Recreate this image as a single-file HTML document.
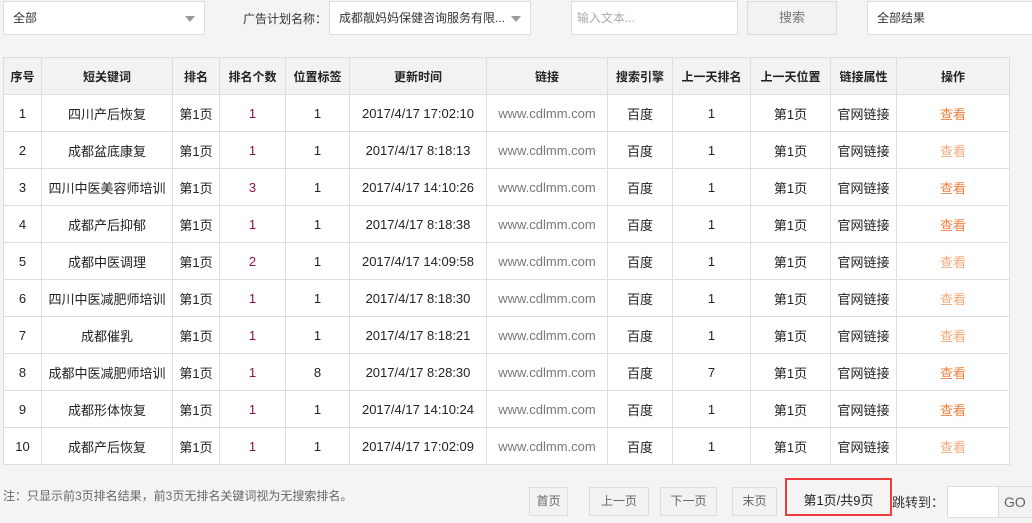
<!DOCTYPE html>
<html><head><meta charset="utf-8"><style>
*{box-sizing:border-box;margin:0;padding:0}
body{width:1032px;height:523px;background:#f4f4f4;font-family:"Liberation Sans","Noto Sans CJK SC",sans-serif;font-size:12px;color:#333;position:relative;overflow:hidden}
.b{position:absolute;background:#fff;border:1px solid #ddd;height:34px;line-height:32px;padding-left:9px;font-size:12px;color:#333}
.tri{position:absolute;right:9px;top:14px;width:0;height:0;border-left:5px solid transparent;border-right:5px solid transparent;border-top:6px solid #999}
table{position:absolute;left:3px;top:57px;border-collapse:collapse;background:#fff;table-layout:fixed;width:1006px}
td,th{border:1px solid #ddd;text-align:center;height:37px;font-size:12px;padding:0;white-space:nowrap;overflow:hidden}
td{font-size:13px}
th{background:#f2f2f2;font-weight:bold;color:#222}
td{color:#222}
.r{color:#8a1048}.l{color:#777}.o{color:#f08040}.g{color:#f4a878}
.btn{position:absolute;top:487px;height:29px;line-height:27px;border:1px solid #ddd;background:#f2f2f2;text-align:center;color:#666;font-size:12px}
</style></head><body>
<div class="b" style="left:3px;top:1px;width:202px">全部<span class="tri"></span></div>
<div style="position:absolute;left:243px;top:10px;color:#333">广告计划名称：</div>
<div class="b" style="left:329px;top:1px;width:202px">成都靓妈妈保健咨询服务有限...<span class="tri"></span></div>
<div class="b" style="left:571px;top:1px;width:167px;color:#aaa;padding-left:5px">输入文本...</div>
<div class="b" style="left:747px;top:1px;width:90px;background:#f2f2f2;text-align:center;padding:0;color:#777;font-size:13px">搜索</div>
<div class="b" style="left:867px;top:1px;width:170px">全部结果</div>
<table>
<colgroup><col style="width:38px"><col style="width:131px"><col style="width:47px"><col style="width:66px"><col style="width:64px"><col style="width:137px"><col style="width:121px"><col style="width:65px"><col style="width:78px"><col style="width:80px"><col style="width:66px"><col style="width:113px"></colgroup>
<tr><th>序号</th><th>短关键词</th><th>排名</th><th>排名个数</th><th>位置标签</th><th>更新时间</th><th>链接</th><th>搜索引擎</th><th>上一天排名</th><th>上一天位置</th><th>链接属性</th><th>操作</th></tr>
<tr><td>1</td><td>四川产后恢复</td><td>第1页</td><td class="r">1</td><td>1</td><td>2017/4/17 17:02:10</td><td class="l">www.cdlmm.com</td><td>百度</td><td>1</td><td>第1页</td><td>官网链接</td><td class="o">查看</td></tr>
<tr><td>2</td><td>成都盆底康复</td><td>第1页</td><td class="r">1</td><td>1</td><td>2017/4/17 8:18:13</td><td class="l">www.cdlmm.com</td><td>百度</td><td>1</td><td>第1页</td><td>官网链接</td><td class="g">查看</td></tr>
<tr><td>3</td><td>四川中医美容师培训</td><td>第1页</td><td class="r">3</td><td>1</td><td>2017/4/17 14:10:26</td><td class="l">www.cdlmm.com</td><td>百度</td><td>1</td><td>第1页</td><td>官网链接</td><td class="o">查看</td></tr>
<tr><td>4</td><td>成都产后抑郁</td><td>第1页</td><td class="r">1</td><td>1</td><td>2017/4/17 8:18:38</td><td class="l">www.cdlmm.com</td><td>百度</td><td>1</td><td>第1页</td><td>官网链接</td><td class="o">查看</td></tr>
<tr><td>5</td><td>成都中医调理</td><td>第1页</td><td class="r">2</td><td>1</td><td>2017/4/17 14:09:58</td><td class="l">www.cdlmm.com</td><td>百度</td><td>1</td><td>第1页</td><td>官网链接</td><td class="g">查看</td></tr>
<tr><td>6</td><td>四川中医减肥师培训</td><td>第1页</td><td class="r">1</td><td>1</td><td>2017/4/17 8:18:30</td><td class="l">www.cdlmm.com</td><td>百度</td><td>1</td><td>第1页</td><td>官网链接</td><td class="g">查看</td></tr>
<tr><td>7</td><td>成都催乳</td><td>第1页</td><td class="r">1</td><td>1</td><td>2017/4/17 8:18:21</td><td class="l">www.cdlmm.com</td><td>百度</td><td>1</td><td>第1页</td><td>官网链接</td><td class="g">查看</td></tr>
<tr><td>8</td><td>成都中医减肥师培训</td><td>第1页</td><td class="r">1</td><td>8</td><td>2017/4/17 8:28:30</td><td class="l">www.cdlmm.com</td><td>百度</td><td>7</td><td>第1页</td><td>官网链接</td><td class="o">查看</td></tr>
<tr><td>9</td><td>成都形体恢复</td><td>第1页</td><td class="r">1</td><td>1</td><td>2017/4/17 14:10:24</td><td class="l">www.cdlmm.com</td><td>百度</td><td>1</td><td>第1页</td><td>官网链接</td><td class="o">查看</td></tr>
<tr><td>10</td><td>成都产后恢复</td><td>第1页</td><td class="r">1</td><td>1</td><td>2017/4/17 17:02:09</td><td class="l">www.cdlmm.com</td><td>百度</td><td>1</td><td>第1页</td><td>官网链接</td><td class="g">查看</td></tr>
</table>
<div style="position:absolute;left:3px;top:487px;color:#666;font-size:12px">注：只显示前3页排名结果，前3页无排名关键词视为无搜索排名。</div>
<div class="btn" style="left:529px;width:39px">首页</div>
<div class="btn" style="left:589px;width:60px">上一页</div>
<div class="btn" style="left:660px;width:57px">下一页</div>
<div class="btn" style="left:732px;width:45px">末页</div>
<div style="position:absolute;left:785px;top:478px;width:107px;height:38px;border:2px solid #f03c3c;line-height:42px;text-align:center;color:#222;font-size:13px">第1页/共9页</div>
<div style="position:absolute;left:892px;top:492px;color:#333;font-size:13px">跳转到：</div>
<div style="position:absolute;left:947px;top:486px;width:52px;height:32px;background:#fff;border:1px solid #ddd"></div>
<div style="position:absolute;left:998px;top:486px;width:40px;height:32px;background:#f2f2f2;border:1px solid #ddd;line-height:30px;padding-left:5px;color:#666;font-size:14px">GO</div>
</body></html>
